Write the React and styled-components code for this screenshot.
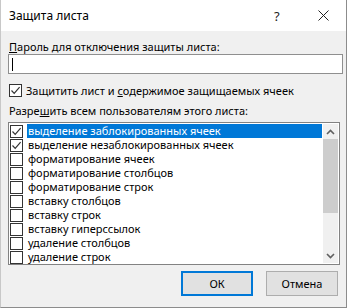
import React, { useState } from "react";
import styled, { createGlobalStyle } from "styled-components";

const GlobalStyle = createGlobalStyle`
    body {
        margin: 0;
        background: #ffffff;
        font-family: "Noto Sans", "Liberation Sans", sans-serif;
        font-size: 11px;
        color: #000;
    }
`;

const permissions = [
    { label: "выделение заблокированных ячеек", checked: true },
    { label: "выделение незаблокированных ячеек", checked: true },
    { label: "форматирование ячеек", checked: false },
    { label: "форматирование столбцов", checked: false },
    { label: "форматирование строк", checked: false },
    { label: "вставку столбцов", checked: false },
    { label: "вставку строк", checked: false },
    { label: "вставку гиперссылок", checked: false },
    { label: "удаление столбцов", checked: false },
    { label: "удаление строк", checked: false },
];

function CheckMark() {
    return (
        <svg width="11" height="11" viewBox="0 0 11 11">
            <polyline
                points="1.5,5.5 4.2,8.3 9.6,2.2"
                fill="none"
                stroke="#333"
                strokeWidth="1.2"
            />
        </svg>
    );
}

function Chevron({ down }) {
    return (
        <svg width="9" height="6" viewBox="0 0 9 6">
            <polyline
                points={down ? "1,1 4.5,4.5 8,1" : "1,5 4.5,1.5 8,5"}
                fill="none"
                stroke="#606060"
                strokeWidth="1.6"
            />
        </svg>
    );
}

function App() {
    const [items, setItems] = useState(permissions);
    const [protect, setProtect] = useState(true);
    const [selected, setSelected] = useState(0);

    const toggle = (i) => {
        setItems(items.map((it, idx) => (idx === i ? { ...it, checked: !it.checked } : it)));
    };

    return (
        <>
            <GlobalStyle />
            <Window>
                <TitleBar>
                    <Title>Защита листа</Title>
                    <HelpButton>?</HelpButton>
                    <CloseButton>
                        <svg width="11" height="11" viewBox="0 0 11 11">
                            <path d="M0.5 0.5 L10.5 10.5 M10.5 0.5 L0.5 10.5" stroke="#222" strokeWidth="1" />
                        </svg>
                    </CloseButton>
                </TitleBar>
                <Body>
                    <Label>
                        <u>П</u>ароль для отключения защиты листа:
                    </Label>
                    <PasswordBox>
                        <Caret />
                    </PasswordBox>
                    <CheckRow onClick={() => setProtect(!protect)}>
                        <Box>{protect && <CheckMark />}</Box>
                        <span>
                            Защитить лист и <u>с</u>одержимое защищаемых ячеек
                        </span>
                    </CheckRow>
                    <Label $gap>
                        Разре<u>ш</u>ить всем пользователям этого листа:
                    </Label>
                    <ListBox>
                        <Rows>
                            {items.map((it, i) => (
                                <Row key={it.label} onClick={() => setSelected(i)}>
                                    <Box
                                        onClick={(e) => {
                                            e.stopPropagation();
                                            toggle(i);
                                        }}
                                    >
                                        {it.checked && <CheckMark />}
                                    </Box>
                                    <RowText $active={selected === i}>{it.label}</RowText>
                                </Row>
                            ))}
                        </Rows>
                        <ScrollBar>
                            <ScrollArrow>
                                <Chevron />
                            </ScrollArrow>
                            <Track>
                                <Thumb />
                            </Track>
                            <ScrollArrow>
                                <Chevron down />
                            </ScrollArrow>
                        </ScrollBar>
                    </ListBox>
                    <Footer>
                        <Button $primary>ОК</Button>
                        <Button>Отмена</Button>
                    </Footer>
                </Body>
            </Window>
        </>
    );
}

const Window = styled.div`
    width: 345px;
    height: 307px;
    border-right: 1px solid #8c8c8c;
    border-bottom: 1px solid #8c8c8c;
    border-left: 1px solid #c8c8c8;
    display: flex;
    flex-direction: column;
    background: #f0f0f0;
`;

const TitleBar = styled.div`
    height: 31px;
    background: #ffffff;
    display: flex;
    align-items: center;
    padding-left: 8px;
`;

const Title = styled.div`
    flex: 1;
    font-size: 12px;
`;

const HelpButton = styled.div`
    width: 14px;
    font-size: 13px;
    margin-right: 30px;
    color: #222;
`;

const CloseButton = styled.div`
    width: 28px;
    display: flex;
    align-items: center;
`;

const Body = styled.div`
    flex: 1;
    display: flex;
    flex-direction: column;
    padding: 8px 6px 0 7px;
`;

const Label = styled.div`
    line-height: 15px;
    margin-top: ${(p) => (p.$gap ? "5px" : "0")};
    margin-left: 1px;
`;

const PasswordBox = styled.div`
    height: 18px;
    width: 330px;
    border: 1px solid #8f8f8f;
    background: #fff;
    display: flex;
    align-items: center;
    padding-left: 3px;
`;

const Caret = styled.div`
    width: 1px;
    height: 13px;
    background: #000;
`;

const CheckRow = styled.div`
    display: flex;
    align-items: center;
    gap: 4px;
    margin-top: 9px;
    margin-left: 1px;
    line-height: 15px;
`;

const Box = styled.div`
    width: 11px;
    height: 11px;
    border: 1px solid #333;
    background: #fff;
    display: flex;
    flex-shrink: 0;
`;

const ListBox = styled.div`
    margin-top: 4px;
    width: 330px;
    height: 141px;
    border: 1px solid #828282;
    background: #fff;
    display: flex;
`;

const Rows = styled.div`
    flex: 1;
    display: flex;
    flex-direction: column;
    padding-top: 1px;
`;

const Row = styled.div`
    height: 14px;
    display: flex;
    align-items: center;
    padding-left: 1px;
`;

const RowText = styled.div`
    flex: 1;
    height: 14px;
    line-height: 14px;
    margin-left: 4px;
    padding-left: 1px;
    background: ${(p) => (p.$active ? "#0078d7" : "transparent")};
    color: ${(p) => (p.$active ? "#fff" : "#000")};
`;

const ScrollBar = styled.div`
    width: 15px;
    margin: 1px;
    display: flex;
    flex-direction: column;
    background: #f0f0f0;
`;

const ScrollArrow = styled.div`
    height: 15px;
    display: flex;
    align-items: center;
    justify-content: center;
`;

const Track = styled.div`
    flex: 1;
`;

const Thumb = styled.div`
    height: 74px;
    background: #cdcdcd;
`;

const Footer = styled.div`
    display: flex;
    justify-content: flex-end;
    gap: 13px;
    margin-top: 6px;
    padding-right: 2px;
`;

const Button = styled.button`
    width: 72px;
    height: 25px;
    font-family: inherit;
    font-size: 11px;
    color: #000;
    background: #e1e1e1;
    border: ${(p) => (p.$primary ? "2px solid #0078d7" : "1px solid #adadad")};
    padding: 0;
`;

export default App;
